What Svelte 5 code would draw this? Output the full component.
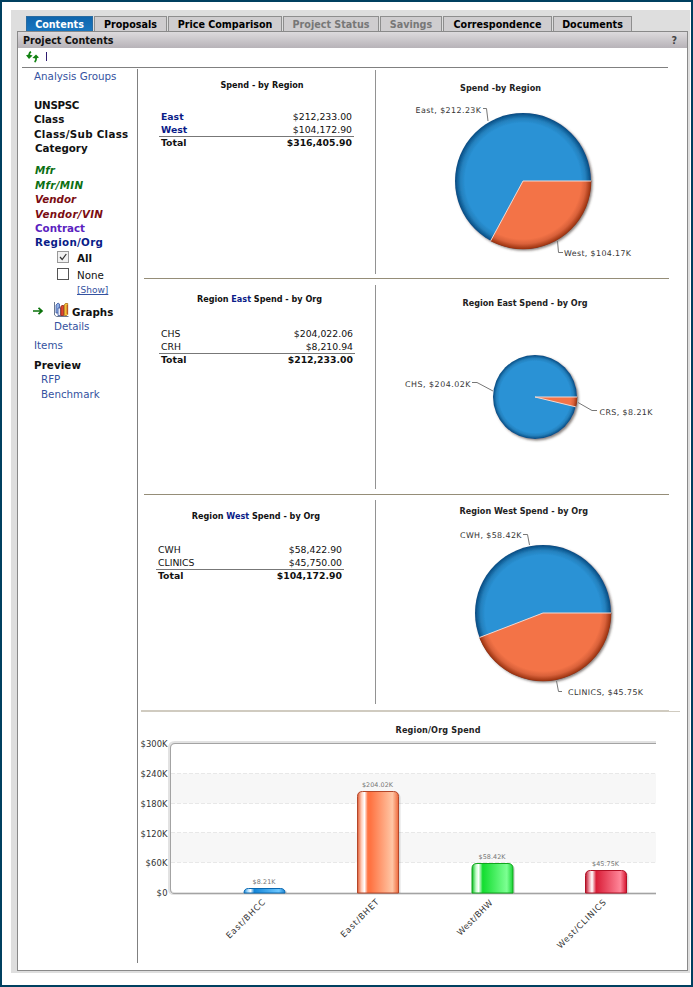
<script lang="ts">
  type Tab = { label: string; width: number; active?: boolean; disabled?: boolean };
  type Row = { name: string; amount: string };

  const tabs: Tab[] = [
    { label: "Contents", width: 67, active: true },
    { label: "Proposals", width: 73 },
    { label: "Price Comparison", width: 114 },
    { label: "Project Status", width: 96, disabled: true },
    { label: "Savings", width: 62, disabled: true },
    { label: "Correspondence", width: 109 },
    { label: "Documents", width: 79 }
  ];

  type Label = { text: string; x: number; y: number; width: number; leader: string };
  type Report = {
    id: string;
    title: string[];
    rows: Row[];
    total: string;
    linked?: boolean;
    pie: {
      top: number;
      title: string;
      titleX: number;
      titleY: number;
      titleWidth: number;
      cx: number;
      cy: number;
      r: number;
      angle: number;
      labels: Label[];
    };
  };

  const reports: Report[] = [
    {
      id: "region",
      title: ["Spend - by Region"],
      linked: true,
      rows: [
        { name: "East", amount: "$212,233.00" },
        { name: "West", amount: "$104,172.90" }
      ],
      total: "$316,405.90",
      pie: {
        top: 68,
        title: "Spend -by Region", titleX: 460, titleY: 90.5, titleWidth: 81,
        cx: 523, cy: 181, r: 68, angle: 118.4,
        labels: [
          { text: "East, $212.23K", x: 415.5, y: 112.7, width: 65.5, leader: "M483 108.5H486.5L488 121" },
          { text: "West, $104.17K", x: 564, y: 256.2, width: 67, leader: "M557.5 241L558.5 252.5H563" }
        ]
      }
    },
    {
      id: "east",
      title: ["Region ", "East", " Spend - by Org"],
      rows: [
        { name: "CHS", amount: "$204,022.06" },
        { name: "CRH", amount: "$8,210.94" }
      ],
      total: "$212,233.00",
      pie: {
        top: 279,
        title: "Region East Spend - by Org", titleX: 462.5, titleY: 306, titleWidth: 125,
        cx: 535, cy: 397, r: 42, angle: 13.6,
        labels: [
          { text: "CHS, $204.02K", x: 405, y: 386.5, width: 65.5, leader: "M472 382.5H477L493 391" },
          { text: "CRS, $8.21K", x: 599.5, y: 414.5, width: 53, leader: "M578 402.5L592 410.5H597" }
        ]
      }
    },
    {
      id: "west",
      title: ["Region ", "West", " Spend - by Org"],
      rows: [
        { name: "CWH", amount: "$58,422.90" },
        { name: "CLINICS", amount: "$45,750.00" }
      ],
      total: "$104,172.90",
      pie: {
        top: 495,
        title: "Region West Spend - by Org", titleX: 459.5, titleY: 514, titleWidth: 128.5,
        cx: 543, cy: 613, r: 68, angle: 158.9,
        labels: [
          { text: "CWH, $58.42K", x: 460, y: 538, width: 61.5, leader: "M523 534.5H527.5L529.5 545" },
          { text: "CLINICS, $45.75K", x: 568, y: 694.5, width: 75, leader: "M556.5 681L558.5 691.5H562" }
        ]
      }
    }
  ];

  const ticks = [
    { text: "$300K", y: 747, width: 27 },
    { text: "$240K", y: 777, width: 27 },
    { text: "$180K", y: 807, width: 27 },
    { text: "$120K", y: 837, width: 27 },
    { text: "$60K", y: 866, width: 22 },
    { text: "$0", y: 896, width: 11 }
  ];

  const bars = [
    { name: "East/BHCC", value: "$8.21K", valueWidth: 23, color: "blue", stroke: "#0b68b0", x: 244, top: 888.5, lx: 229.5, ly: 939, len: 51 },
    { name: "East/BHET", value: "$204.02K", valueWidth: 31, color: "orange", stroke: "#b4472a", x: 357.5, top: 791.5, lx: 344, ly: 938, len: 50 },
    { name: "West/BHW", value: "$58.42K", valueWidth: 27, color: "green", stroke: "#10a51c", x: 472, top: 863.5, lx: 460.5, ly: 936, len: 46 },
    { name: "West/CLINICS", value: "$45.75K", valueWidth: 27, color: "red", stroke: "#b01025", x: 585.5, top: 870.5, lx: 560.5, ly: 949, len: 65 }
  ];

  function pointAt(cx: number, cy: number, r: number, angle: number) {
    const a = (angle * Math.PI) / 180;
    return `${cx + r * Math.cos(a)} ${cy + r * Math.sin(a)}`;
  }

  function barPath(x: number, top: number) {
    const r = Math.min(5, 893 - top);
    return `M${x} 893V${top + r}Q${x} ${top} ${x + r} ${top}H${x + 41 - r}Q${x + 41} ${top} ${x + 41} ${top + r}V893Z`;
  }
</script>

<div class="page">
  <div class="shell">
    <nav class="tabs">
      {#each tabs as tab (tab.label)}
        <button
          type="button"
          class="tab"
          class:active={tab.active}
          class:disabled={tab.disabled}
          style="width: {tab.width}px"
        >{tab.label}</button>
      {/each}
    </nav>

    <div class="panel">
      <header class="titlebar">
        <span>Project Contents</span>
        <span class="help">?</span>
      </header>

      <div class="toolbar">
        <svg width="13" height="12" viewBox="0 0 13 12" aria-label="Refresh">
          <path d="M5 0.8Q2.8 2 3.2 5M8.6 11Q10.6 9.5 10 6" fill="none" stroke="#128212" stroke-width="1.7" />
          <path d="M0 4.2L3 3.4L6.6 4.6L3 8ZM6.4 7L10 3.4L13 6.6L10 7.4Z" fill="#128212" />
        </svg>
        <span class="separator"></span>
      </div>

      <div class="body">
        <aside class="sidebar">
          <a class="link" href="#groups">Analysis Groups</a>
          <ul class="group first">
            <li class="narrow">UNSPSC</li>
            <li>Class</li>
            <li class="wide">Class/Sub Class</li>
            <li class="indent">Category</li>
          </ul>
          <ul class="group second">
            <li class="green">Mfr</li>
            <li class="green wide">Mfr/MIN</li>
            <li class="maroon">Vendor</li>
            <li class="maroon wide">Vendor/VIN</li>
            <li class="purple">Contract</li>
            <li class="navy wide">Region/Org</li>
          </ul>
          <div class="check">
            <svg width="13" height="13" viewBox="0 0 13 13">
              <rect x="0.5" y="0.5" width="11" height="11" fill="#f1f1f1" stroke="#999" />
              <path d="M3 6L5.2 8.5L9.3 3" fill="none" stroke="#333" stroke-width="1.2" />
            </svg>
            <b>All</b>
          </div>
          <div class="check none">
            <svg width="13" height="13" viewBox="0 0 13 13">
              <rect x="0.5" y="0.5" width="11" height="11" fill="#fff" stroke="#555" />
            </svg>
            <span>None</span>
          </div>
          <a class="show" href="#show">[Show]</a>
          <div class="graphs">
            <svg class="arrow" width="11" height="8" viewBox="0 0 11 8">
              <path d="M0 4H9M5.5 0.8L9 4L5.5 7.2" fill="none" stroke="#0a720a" stroke-width="1.7" />
            </svg>
            <svg width="15" height="15" viewBox="0 0 15 15">
              <path d="M0.5 0V13L2.5 14.5H14.5" fill="none" stroke="#6a7890" />
              <path d="M2 3L4 1L5.5 2V11H2Z" fill="#8fb0e6" stroke="#3a55a0" stroke-width="0.8" />
              <path d="M4 6H6.7V13.5H4Z" fill="#e6ecfa" stroke="#3a55a0" stroke-width="0.8" />
              <path d="M6.8 4.5L8 3.5H9.7V13.5H6.8Z" fill="#e0442e" stroke="#8d1d12" stroke-width="0.8" />
              <path d="M10.3 3L11.4 1.5H13.7V12.5L12.7 13.5H10.3Z" fill="#f6c437" stroke="#a86b12" stroke-width="0.8" />
              <path d="M13.2 3V12" stroke="#b53a1e" stroke-width="0.9" />
            </svg>
            <b>Graphs</b>
          </div>
          <a class="link details" href="#details">Details</a>
          <a class="link items" href="#items">Items</a>
          <b class="preview">Preview</b>
          <a class="link sub" href="#rfp">RFP</a>
          <a class="link sub" href="#benchmark">Benchmark</a>
        </aside>

        <main class="content">
          <svg class="defs" width="0" height="0">
            <defs>
              <radialGradient id="pieBlue">
                <stop offset="0.85" stop-color="#2a92d5" />
                <stop offset="0.92" stop-color="#2480bd" />
                <stop offset="1" stop-color="#04497f" />
              </radialGradient>
              <radialGradient id="pieOrange">
                <stop offset="0.85" stop-color="#f37347" />
                <stop offset="0.92" stop-color="#d9613a" />
                <stop offset="1" stop-color="#962f0c" />
              </radialGradient>
              <filter id="pieShadow" x="-10%" y="-10%" width="120%" height="120%">
                <feDropShadow dx="1.6" dy="1.6" stdDeviation="1" flood-color="#4a4038" flood-opacity="0.65" />
              </filter>
            </defs>
          </svg>

          {#each reports as report (report.id)}
            {@const pie = report.pie}
            <section class="report {report.id}">
              <div class="summary">
                <h2>
                  {#each report.title as part, i}{#if i === 1}<span class="navy">{part}</span>{:else}{part}{/if}{/each}
                </h2>
                <table>
                  <tbody>
                    {#each report.rows as row (row.name)}
                      <tr>
                        <td class:region-link={report.linked}>{row.name}</td>
                        <td class="amount">{row.amount}</td>
                      </tr>
                    {/each}
                    <tr class="total">
                      <td>Total</td>
                      <td class="amount">{report.total}</td>
                    </tr>
                  </tbody>
                </table>
              </div>
              <svg class="chart" width="293" height="210" viewBox="376 {pie.top} 293 210">
                <text class="chart-title" x={pie.titleX} y={pie.titleY} textLength={pie.titleWidth}>{pie.title}</text>
                <circle cx={pie.cx} cy={pie.cy} r={pie.r} fill="url(#pieBlue)" filter="url(#pieShadow)" />
                <!-- second slice carries its own circle so the rim shading stays centred on the pie -->
                <clipPath id="slice-{report.id}">
                  <path d="M{pie.cx} {pie.cy}H{pie.cx + pie.r + 2}A{pie.r + 2} {pie.r + 2} 0 0 1 {pointAt(pie.cx, pie.cy, pie.r + 2, pie.angle)}Z" />
                </clipPath>
                <circle cx={pie.cx} cy={pie.cy} r={pie.r + 0.3} fill="url(#pieOrange)" clip-path="url(#slice-{report.id})" />
                <path class="slice-edge" d="M{pie.cx + pie.r} {pie.cy}H{pie.cx}L{pointAt(pie.cx, pie.cy, pie.r, pie.angle)}" />
                {#each pie.labels as label (label.text)}
                  <path class="leader" d={label.leader} />
                  <text class="chart-label" x={label.x} y={label.y} textLength={label.width}>{label.text}</text>
                {/each}
              </svg>
            </section>
          {/each}

          <svg class="bar-chart" width="545" height="251" viewBox="138 711 545 251">
            <defs>
              <linearGradient id="bar-blue">
                <stop offset="0" stop-color="#1385d8" /><stop offset="0.08" stop-color="#9cd5fb" />
                <stop offset="0.16" stop-color="#fff" /><stop offset="0.25" stop-color="#1385d8" />
                <stop offset="0.85" stop-color="#6cc7ff" /><stop offset="1" stop-color="#1b83cf" />
              </linearGradient>
              <linearGradient id="bar-orange">
                <stop offset="0" stop-color="#e0592f" /><stop offset="0.1" stop-color="#ffd0bd" />
                <stop offset="0.17" stop-color="#fff" /><stop offset="0.25" stop-color="#ff7443" />
                <stop offset="0.32" stop-color="#ff7443" /><stop offset="0.85" stop-color="#ffc6a5" /><stop offset="1" stop-color="#ef6a3c" />
              </linearGradient>
              <linearGradient id="bar-green">
                <stop offset="0" stop-color="#0bbd22" /><stop offset="0.1" stop-color="#c5ffcb" />
                <stop offset="0.16" stop-color="#fff" /><stop offset="0.26" stop-color="#12dd2f" />
                <stop offset="0.85" stop-color="#7dff93" /><stop offset="1" stop-color="#17d434" />
              </linearGradient>
              <linearGradient id="bar-red">
                <stop offset="0" stop-color="#bb1129" /><stop offset="0.1" stop-color="#f2a9b4" />
                <stop offset="0.16" stop-color="#fff" /><stop offset="0.26" stop-color="#d91d37" />
                <stop offset="0.85" stop-color="#ff8699" /><stop offset="1" stop-color="#d5122d" />
              </linearGradient>
            </defs>
            <path d="M141 711.5H680" stroke="#d0cbc0" />
            <text class="chart-title" x="395.5" y="732.7" textLength="85">Region/Org Spend</text>
            <rect x="171" y="773.5" width="485" height="30" fill="#f7f7f7" />
            <rect x="171" y="832.5" width="485" height="30" fill="#f7f7f7" />
            <path class="grid" d="M171 773.5H656M171 803.5H656M171 832.5H656M171 862.5H656" />
            <path d="M656 742.5H175Q169.5 742.5 169.5 748V889Q169.5 893.5 174 893.5H656" fill="none" stroke="#e2e2e2" stroke-width="3" />
            <path d="M656 743.5H175Q170.5 743.5 170.5 748V889Q170.5 893.5 174 893.5H656" fill="none" stroke="#a3a3a3" />
            {#each ticks as tick (tick.text)}
              <text class="tick" x={167.5 - tick.width} y={tick.y} textLength={tick.width}>{tick.text}</text>
            {/each}
            {#each bars as bar (bar.name)}
              <path d={barPath(bar.x + 2, bar.top + 1.5)} fill="#000" opacity="0.13" />
              <path d={barPath(bar.x, bar.top)} fill="url(#bar-{bar.color})" stroke={bar.stroke} />
              <text class="value" x={bar.x + 20 - bar.valueWidth / 2} y={bar.top - 5} textLength={bar.valueWidth}>{bar.value}</text>
              <text class="tick" transform="translate({bar.lx} {bar.ly}) rotate(-45)" textLength={bar.len}>{bar.name}</text>
            {/each}
          </svg>
        </main>
      </div>
    </div>
  </div>
</div>

<style>
  :global(body) {
    margin: 0;
    background: #fff;
  }

  .page {
    box-sizing: border-box;
    width: 693px;
    height: 987px;
    padding: 8px 1px 0 9px;
    border: 2px solid #004060;
    background: #fff;
    font-family: "DejaVu Sans", Verdana, sans-serif;
    font-size: 10.3px;
    color: #111;
  }

  .shell {
    box-sizing: border-box;
    width: 679px;
    height: 963px;
    padding: 6px 2px 2px 6px;
    background: #dedede;
  }

  .tabs {
    display: flex;
    gap: 1px;
    height: 15px;
    padding-left: 9px;
  }

  .tab {
    box-sizing: border-box;
    flex: none;
    padding: 1px 0 0;
    border: 1px solid #8e8e8e;
    border-bottom: 0;
    background: #cfcdcf;
    font: bold 9.6px/14px "DejaVu Sans", Verdana, sans-serif;
    color: #000;
    white-space: nowrap;
  }

  .tab.active {
    border-color: #2a6ba0;
    background: linear-gradient(#0f65ad, #1976bf);
    color: #fff;
  }

  .tab.disabled {
    color: #777;
  }

  .panel {
    box-sizing: border-box;
    height: 940px;
    border: 1px solid #898989;
    background: #fff;
  }

  .titlebar {
    display: flex;
    justify-content: space-between;
    height: 16px;
    padding: 0 10px 0 5px;
    background: linear-gradient(#dddbdd, #b7b3b8);
    font-weight: bold;
    font-size: 9.6px;
    line-height: 18px;
  }

  .help {
    color: #444;
  }

  .toolbar {
    display: flex;
    align-items: center;
    box-sizing: border-box;
    width: 646px;
    height: 20px;
    margin-left: 4px;
    padding: 0 0 2px 4px;
    border-bottom: 1px solid #808080;
  }

  .separator {
    width: 1px;
    height: 9px;
    margin-left: 7px;
    background: #2e1b70;
  }

  .body {
    display: flex;
  }

  .sidebar {
    display: flex;
    flex-direction: column;
    align-items: flex-start;
    box-sizing: border-box;
    width: 120px;
    height: 894px;
    margin-top: 1px;
    padding-left: 16px;
    border-right: 1px solid #808080;
    line-height: 14.4px;
    white-space: nowrap;
  }

  a {
    color: #3452a0;
    text-decoration: none;
  }

  .group {
    margin: 0;
    padding: 0;
    list-style: none;
    font-weight: bold;
  }

  .first {
    margin-top: 14.5px;
  }

  .second {
    margin-top: 7.8px;
    padding-left: 1px;
  }

  .indent {
    padding-left: 1px;
  }

  .narrow {
    letter-spacing: -0.3px;
  }

  .wide {
    letter-spacing: 0.3px;
  }

  .green {
    color: #0b6f12;
    font-style: italic;
  }

  .maroon {
    color: #7b0d12;
    font-style: italic;
  }

  .purple {
    color: #5b1fc0;
  }

  .navy,
  .region-link {
    color: #0a1c88;
  }

  .check {
    display: flex;
    align-items: center;
    gap: 7px;
    height: 16px;
    padding-left: 23px;
  }

  .check.none {
    padding-top: 1px;
  }

  .show {
    margin: 0 0 0 43px;
    font-size: 9px;
    line-height: 14px;
    text-decoration: underline;
  }

  .graphs {
    display: flex;
    align-items: center;
    height: 17px;
    margin: 4px 0 0 -1px;
  }

  .graphs .arrow {
    margin: 4px 10px 0 0;
  }

  .graphs b {
    padding: 5px 0 0 3px;
  }

  .details {
    margin: 1.6px 0 0 20px;
    letter-spacing: -0.05px;
  }

  .items {
    margin-top: 4.6px;
  }

  .preview {
    margin-top: 5px;
    letter-spacing: 0.1px;
  }

  .sub {
    margin-left: 7px;
  }

  .content {
    width: 549px;
  }

  .defs {
    display: block;
  }

  .report {
    display: grid;
    grid-template-columns: 232px 293px;
    box-sizing: border-box;
    width: 525px;
    height: 211px;
    margin-left: 6px;
    border-bottom: 1px solid #958d78;
  }

  .report.east,
  .report.west {
    height: 216px;
  }

  .report.west {
    width: 528px;
    grid-template-columns: 235px 293px;
    margin-left: 3px;
    border-bottom-color: #d0cbc0;
  }

  .summary {
    box-sizing: border-box;
    height: 204px;
    margin-top: 2px;
    padding: 9px 0 0 15px;
    border-right: 1px solid #929292;
  }

  .east .summary {
    margin-top: 6px;
    padding-top: 8px;
  }

  .west .summary {
    margin-top: 5px;
  }

  h2 {
    width: 206px;
    margin: 0;
    font-size: 8.1px;
    line-height: 12px;
    text-align: center;
    white-space: nowrap;
  }

  .east h2 {
    width: 201px;
  }

  .west h2 {
    width: 200px;
    padding-top: 1px;
  }

  table {
    width: 195px;
    margin-top: 19px;
    border-collapse: separate;
    border-spacing: 0;
    font-size: 9.3px;
    line-height: 13px;
  }

  .east table {
    width: 196px;
    margin-top: 22px;
  }

  .west table {
    width: 188px;
    margin-top: 21px;
  }

  td {
    height: 13px;
    padding: 0 2px;
  }

  .region-link {
    font-weight: bold;
  }

  .amount {
    text-align: right;
  }

  .total td {
    height: 11px;
    border-top: 1px solid #777;
    font-weight: bold;
    line-height: 11px;
  }

  .chart,
  .bar-chart {
    display: block;
  }

  .chart-title {
    font-size: 8.1px;
    font-weight: bold;
    fill: #222;
  }

  .chart-label {
    font-size: 7.9px;
    fill: #333;
  }

  .tick {
    font-size: 8.4px;
    fill: #333;
  }

  .value {
    font-size: 6.4px;
    fill: #777;
  }

  .slice-edge {
    fill: none;
    stroke: #f3d8d0;
  }

  .leader {
    fill: none;
    stroke: #777;
  }

  .grid {
    fill: none;
    stroke: #e8e8e8;
    stroke-dasharray: 4 2;
  }
</style>
